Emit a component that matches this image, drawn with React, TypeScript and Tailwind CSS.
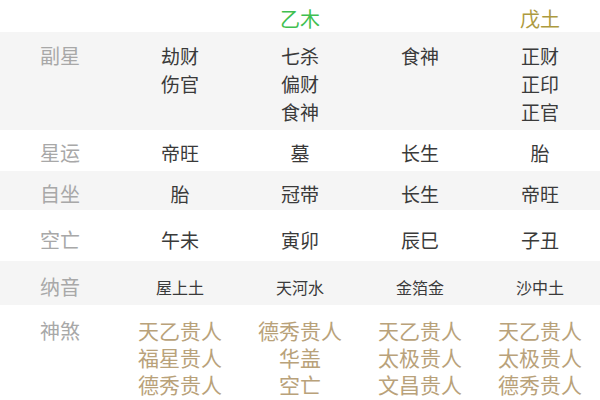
const cols = "grid grid-cols-5 text-center"

type Row = {
  label: string
  values: string[][]
  bg: string
  pad: string
  valueClass: string
  leading: string
}

const rows: Row[] = [
  {
    label: "副星",
    values: [["劫财", "伤官"], ["七杀", "偏财", "食神"], ["食神"], ["正财", "正印", "正官"]],
    bg: "bg-[#f5f5f5]",
    pad: "pt-[10px] h-[98px]",
    valueClass: "text-[19px] text-[#3a3a3a]",
    leading: "leading-[28px]",
  },
  {
    label: "星运",
    values: [["帝旺"], ["墓"], ["长生"], ["胎"]],
    bg: "bg-white",
    pad: "pt-[9px] h-[41px]",
    valueClass: "text-[19px] text-[#3a3a3a]",
    leading: "leading-[28px]",
  },
  {
    label: "自坐",
    values: [["胎"], ["冠带"], ["长生"], ["帝旺"]],
    bg: "bg-[#f5f5f5]",
    pad: "pt-[9px] h-[39px]",
    valueClass: "text-[19px] text-[#3a3a3a]",
    leading: "leading-[28px]",
  },
  {
    label: "空亡",
    values: [["午未"], ["寅卯"], ["辰巳"], ["子丑"]],
    bg: "bg-white",
    pad: "pt-[16px] h-[51px]",
    valueClass: "text-[19px] text-[#3a3a3a]",
    leading: "leading-[28px]",
  },
  {
    label: "纳音",
    values: [["屋上土"], ["天河水"], ["金箔金"], ["沙中土"]],
    bg: "bg-[#f5f5f5]",
    pad: "pt-[12px] h-[44px]",
    valueClass: "text-[16px] text-[#3a3a3a]",
    leading: "leading-[28px]",
  },
  {
    label: "神煞",
    values: [
      ["天乙贵人", "福星贵人", "德秀贵人"],
      ["德秀贵人", "华盖", "空亡"],
      ["天乙贵人", "太极贵人", "文昌贵人"],
      ["天乙贵人", "太极贵人", "德秀贵人"],
    ],
    bg: "bg-white",
    pad: "pt-[12px] h-[95px]",
    valueClass: "text-[21px] text-[#b9a27a]",
    leading: "leading-[27px]",
  },
]

export default function App() {
  return (
    <div
      className="w-[600px] h-[400px] overflow-hidden bg-white"
      style={{ fontFamily: '"Noto Sans CJK SC", "Noto Sans", sans-serif' }}
    >
      {/* 天干 row, cut off at the top */}
      <div className={`${cols} h-[32px] pt-[5px] text-[20px] leading-[28px]`}>
        <div />
        <div />
        <div className="text-[#3fbf50]">乙木</div>
        <div />
        <div className="text-[#ad9a3e]">戊土</div>
      </div>

      {rows.map((row) => (
        <div key={row.label} className={`${cols} ${row.bg} ${row.pad}`}>
          <div className="text-[20px] leading-[28px] text-[#a8a8a8]">{row.label}</div>
          {row.values.map((cell, i) => (
            <div key={i} className={`flex flex-col ${row.valueClass} ${row.leading}`}>
              {cell.map((v, j) => (
                <span key={j}>{v}</span>
              ))}
            </div>
          ))}
        </div>
      ))}
    </div>
  )
}
